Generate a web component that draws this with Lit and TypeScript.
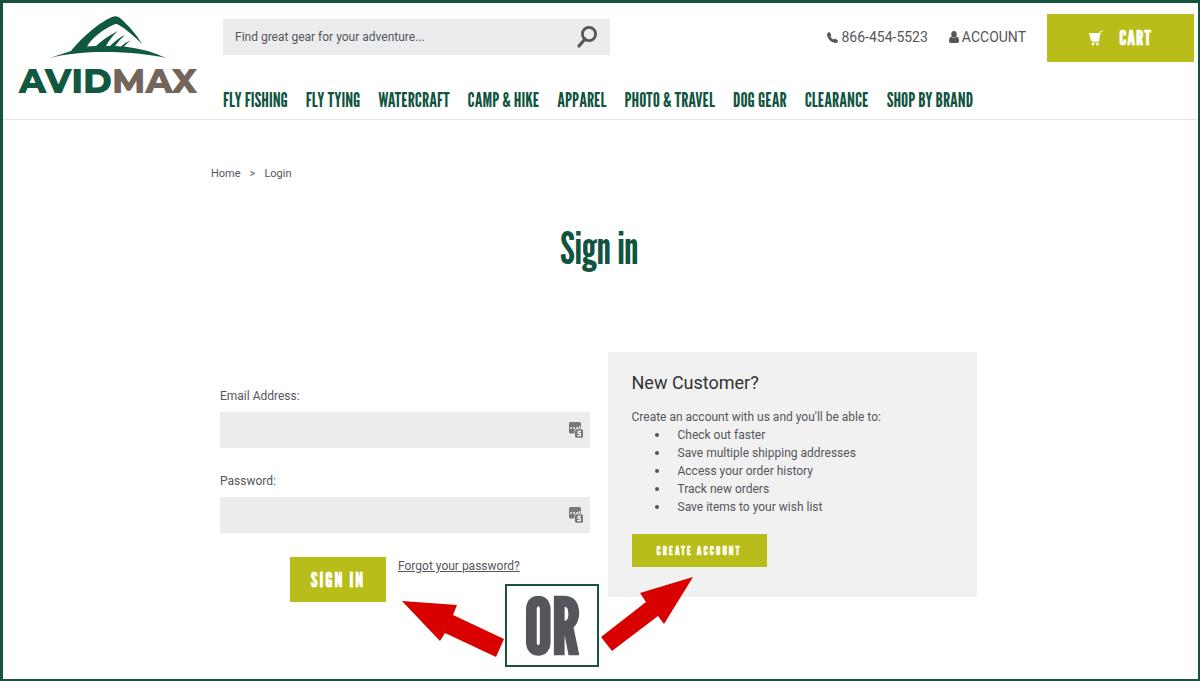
import { LitElement, html, css } from "lit";
import { customElement } from "lit/decorators.js";

const NAV = [
  "Fly Fishing",
  "Fly Tying",
  "Watercraft",
  "Camp & Hike",
  "Apparel",
  "Photo & Travel",
  "Dog Gear",
  "Clearance",
  "Shop By Brand",
];

const BENEFITS = [
  "Check out faster",
  "Save multiple shipping addresses",
  "Access your order history",
  "Track new orders",
  "Save items to your wish list",
];

const base = css`
  *,
  *::before,
  *::after {
    box-sizing: border-box;
  }
  a {
    color: inherit;
    text-decoration: none;
  }
  button,
  input {
    border: 0;
    border-radius: 0;
    margin: 0;
    font: inherit;
  }
  button {
    cursor: pointer;
  }
  svg {
    display: block;
  }
`;

@customElement("site-header")
class SiteHeader extends LitElement {
  static styles = [
    base,
    css`
      :host {
        display: block;
        border-bottom: 1px solid #e6e6e6;
      }
      .bar {
        display: grid;
        grid-template-columns: 182px minmax(0, 1fr);
        column-gap: 24px;
        padding: 11px 4px 7px 14px;
      }
      .logo {
        display: flex;
        flex-direction: column;
        align-items: center;
        width: 182px;
        padding-top: 1px;
      }
      .wordmark {
        font: 800 35px/28px Montserrat, Inter, sans-serif;
        margin-top: 8px;
        color: #10583f;
        white-space: nowrap;
      }
      .max {
        color: #73655b;
      }
      .top {
        display: flex;
        align-items: flex-start;
        gap: 21px;
      }
      .search {
        display: flex;
        align-items: center;
        width: 387px;
        height: 36px;
        margin-top: 5px;
        margin-right: auto;
        background: #ebecee;
      }
      .query {
        flex: 1;
        min-width: 0;
        height: 36px;
        padding: 0 12px;
        background: transparent;
        font-size: 12px;
        color: #54565b;
      }
      .query::placeholder {
        color: #54565b;
        opacity: 1;
      }
      .go {
        padding: 0 12px;
        background: transparent;
      }
      .contact {
        display: flex;
        align-items: center;
        gap: 3px;
        height: 46px;
        font-size: 14px;
        color: #54565b;
        white-space: nowrap;
      }
      .cart {
        display: flex;
        align-items: center;
        justify-content: center;
        gap: 16px;
        width: 147px;
        height: 48px;
        background: #b9bd19;
        color: #fff;
        font: 700 20px/24px var(--condensed);
        letter-spacing: 1px;
      }
      .nav {
        display: flex;
        flex-wrap: wrap;
        gap: 4px 18px;
        margin-top: 26px;
        font: 400 20px/24px var(--condensed);
        color: #10543f;
        text-transform: uppercase;
        white-space: nowrap;
      }
    `,
  ];

  render() {
    return html`
      <header class="bar">
        <a class="logo" href="#" aria-label="AvidMax home">
          <svg width="116" height="44" viewBox="0 0 116 44" aria-hidden="true">
            <path
              fill="#10583f"
              d="M0 43C8 40 15 38 21 36C29 26 46 9 62 2Q67 0 70 3C79 11 87 20 92 29C84 21 76 14 68 9.5Q66 8.5 63 10C52 15 42 23 37 31.5L46 31C52 25 60 20 68 16Q60 23 56 31L60 31Q68 23 75 20Q69 25 65 31L71 31.5Q76 27 81 25Q77 28 74 31.5Q97 34 116 43C92 37 36 33 0 43Z"
            />
          </svg>
          <span class="wordmark">AVID<span class="max">MAX</span></span>
        </a>
        <div>
          <div class="top">
            <form class="search" role="search">
              <input
                class="query"
                type="search"
                aria-label="Search"
                placeholder="Find great gear for your adventure..."
              />
              <button class="go" type="button" aria-label="Search">
                <svg width="21" height="22" viewBox="0 0 21 22" fill="none" stroke="#54565b">
                  <circle cx="12" cy="8" r="6.6" stroke-width="2.8" />
                  <path d="M8 13L2 20" stroke-width="3.2" stroke-linecap="round" />
                </svg>
              </button>
            </form>
            <a class="contact" href="tel:8664545523">
              <svg width="11" height="11" viewBox="0 0 11 11" fill="#54565b" aria-hidden="true">
                <path d="M2.4 0L4.4 3.2L3.4 4.6Q4.4 6.4 6.3 7.5L7.8 6.6L11 8.4Q11 10.9 8.5 11Q5.5 10.9 2.6 8.2Q0 5.2 0 2.4Q0.2 0.1 2.4 0Z" />
              </svg>
              866-454-5523
            </a>
            <a class="contact" href="#">
              <svg width="10" height="12" viewBox="0 0 10 12" fill="#54565b" aria-hidden="true">
                <ellipse cx="5" cy="3.2" rx="2.7" ry="3.2" />
                <path d="M2.2 5.6Q5 8 7.8 5.6Q10 6.5 10 10.2Q10 12 8 12H2Q0 12 0 10.2Q0 6.5 2.2 5.6Z" />
              </svg>
              ACCOUNT
            </a>
            <a class="cart" href="#">
              <svg width="14" height="16" viewBox="0 0 14 16" aria-hidden="true">
                <path fill="#fff" d="M0 3H10.3L9.4 9.5Q9 11 7.8 11H3Q2 11 1.6 9.5Z" />
                <path fill="none" stroke="#fff" stroke-width="1.2" d="M3 12H8.4Q9.6 12 9.9 9L11 2.5Q11.3 1 13.6 1" />
                <circle cx="4" cy="14.2" r="1.3" fill="#fff" />
                <circle cx="8.4" cy="14.2" r="1.3" fill="#fff" />
              </svg>
              CART
            </a>
          </div>
          <nav class="nav">${NAV.map((n) => html`<a href="#">${n}</a>`)}</nav>
        </div>
      </header>
    `;
  }
}

@customElement("login-field")
class LoginField extends LitElement {
  static properties = { label: {}, type: {} };
  declare label: string;
  declare type: string;

  static styles = [
    base,
    css`
      :host {
        display: block;
      }
      .label {
        display: block;
        margin-bottom: 7px;
        font-size: 12px;
        line-height: 18px;
      }
      .box {
        display: flex;
        align-items: center;
        height: 36px;
        padding-right: 7px;
        background: #ebecee;
      }
      .input {
        flex: 1;
        min-width: 0;
        height: 36px;
        padding: 0 10px;
        background: transparent;
      }
    `,
  ];

  render() {
    return html`
      <label class="label" for="field">${this.label}</label>
      <div class="box">
        <input class="input" id="field" type=${this.type} />
        <svg width="14" height="16" viewBox="0 0 14 16" aria-hidden="true">
          <path fill="#77787b" d="M1.5 0H10.5Q12 0 12 1.5V6.5H7.5Q5.5 6.5 5.5 8.5V11.5H1.5Q0 11.5 0 10V1.5Q0 0 1.5 0Z" />
          <path stroke="#ebecee" stroke-width="1.4" stroke-dasharray="2 1" d="M1 6H10.5M10.5 6V3" fill="none" />
          <rect x="6" y="7.3" width="8" height="8.5" rx="1.5" fill="#77787b" />
          <path fill="none" stroke="#fff" stroke-width="1.2" d="M11.8 9.3H9.2V11.3H11.2V13.6H8.4" />
        </svg>
      </div>
    `;
  }
}

@customElement("app-root")
class AppRoot extends LitElement {
  static styles = [
    base,
    css`
      :host {
        --condensed: "League Gothic", "Roboto Condensed", "Liberation Sans Narrow", "Liberation Sans", sans-serif;
        display: block;
        min-height: 100vh;
        box-sizing: border-box;
        border: solid #14533d;
        border-width: 3px 2px 2px 3px;
        background: #fff;
        color: #54565b;
        font-family: Roboto, sans-serif;
        font-size: 12px;
        line-height: 18px;
      }
      .page {
        max-width: 779px;
        margin: 0 auto;
        padding: 45px 3px 24px 0;
      }
      .crumbs {
        display: flex;
        gap: 9px;
        font-size: 11px;
      }
      .title {
        margin: 35px 0 0;
        text-align: center;
        font: 400 44px/60px var(--condensed);
        color: #10543f;
      }
      .columns {
        position: relative;
        display: grid;
        grid-template-columns: 1fr 1fr;
        align-items: start;
        column-gap: 18px;
        margin-top: 74px;
        padding: 0 10px 0 9px;
      }
      .login {
        display: flex;
        flex-direction: column;
        gap: 24px;
        padding-top: 35px;
      }
      .actions {
        display: flex;
        align-items: flex-start;
        gap: 12px;
        padding-left: 70px;
      }
      .signin {
        width: 96px;
        height: 45px;
        background: #b9bd19;
        color: #fff;
        font: 700 20px/24px var(--condensed);
        letter-spacing: 2px;
      }
      .forgot {
        text-decoration: underline;
      }
      .customer {
        padding: 21px 24px 30px;
        background: #f1f1f1;
      }
      .heading {
        margin: 0 0 15px;
        font-size: 18px;
        line-height: 20px;
        font-weight: 400;
        color: #333;
      }
      .intro {
        margin: 0;
      }
      .list {
        margin: 0 0 18px;
        padding: 0;
        list-style: none;
      }
      .item {
        display: flex;
        align-items: center;
        gap: 19px;
        padding-left: 23px;
      }
      .item::before {
        content: "";
        width: 4px;
        height: 4px;
        border-radius: 50%;
        background: #54565b;
      }
      .create {
        width: 135px;
        height: 33px;
        background: #b9bd19;
        color: #fff;
        font: 700 12px/16px var(--condensed);
        letter-spacing: 2px;
      }
      .choice {
        position: absolute;
        left: 50%;
        top: 225px;
        display: flex;
        align-items: flex-start;
        margin-left: -197px;
        pointer-events: none;
      }
      .or {
        width: 94px;
        height: 83px;
        margin: 7px 1px 0;
        border: 2px solid #14533d;
        background: #fff;
        text-align: center;
        font: 700 77px/80px var(--condensed);
      }
    `,
  ];

  render() {
    return html`
      <site-header></site-header>
      <main class="page">
        <nav class="crumbs" aria-label="Breadcrumb">
          <a href="#">Home</a><span>&gt;</span><a href="#">Login</a>
        </nav>
        <h1 class="title">Sign in</h1>
        <div class="columns">
          <form class="login">
            <login-field label="Email Address:" type="email"></login-field>
            <login-field label="Password:" type="password"></login-field>
            <div class="actions">
              <button class="signin" type="button">SIGN IN</button>
              <a class="forgot" href="#">Forgot your password?</a>
            </div>
          </form>
          <section class="customer">
            <h2 class="heading">New Customer?</h2>
            <p class="intro">Create an account with us and you'll be able to:</p>
            <ul class="list">
              ${BENEFITS.map((b) => html`<li class="item">${b}</li>`)}
            </ul>
            <button class="create" type="button">CREATE ACCOUNT</button>
          </section>
          <div class="choice">
            <svg width="102" height="84" viewBox="402 577 102 84" aria-hidden="true">
              <path fill="#d90000" d="M402 601L457 605L453 615L504 639L496 657L445 633L440 641Z" />
            </svg>
            <div class="or">OR</div>
            <svg width="94" height="84" viewBox="600 577 94 84" aria-hidden="true">
              <path fill="#d90000" d="M693 577L664 624L658 616L612 651L601 637L646 602L640 593Z" />
            </svg>
          </div>
        </div>
      </main>
    `;
  }
}
